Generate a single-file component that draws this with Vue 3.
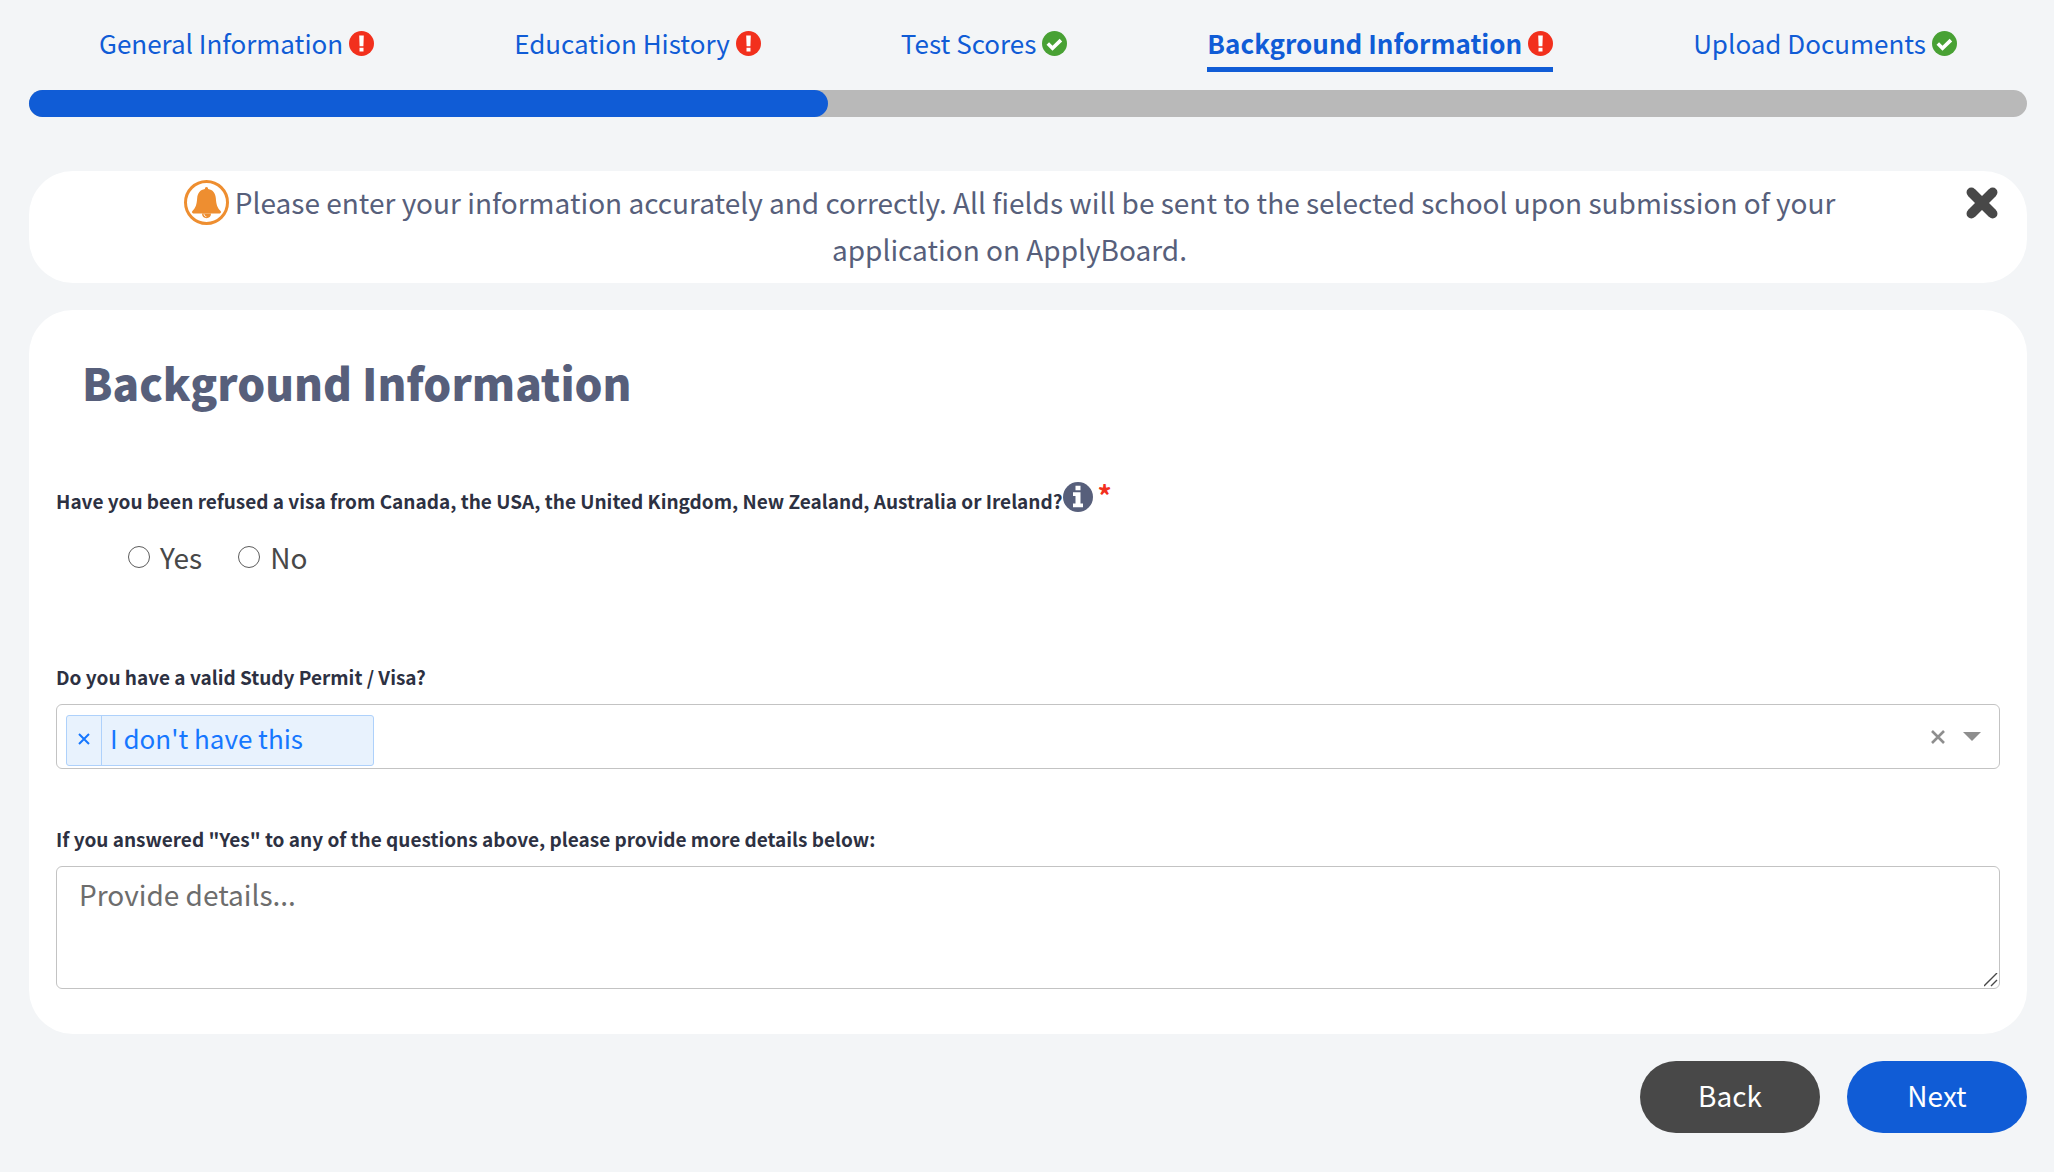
<script setup>
import { ref } from 'vue'

const tabs = [
  { label: 'General Information', complete: false },
  { label: 'Education History', complete: false },
  { label: 'Test Scores', complete: true },
  { label: 'Background Information', complete: false, current: true },
  { label: 'Upload Documents', complete: true },
]

const progress = ref(40)
const showNotice = ref(true)
const refused = ref('')
const permits = ref(["I don't have this"])
const details = ref('')

function removePermit(index) {
  permits.value.splice(index, 1)
}
</script>

<template>
  <div class="page">
    <nav class="tabs" aria-label="Application steps">
      <a
        v-for="tab in tabs"
        :key="tab.label"
        href="#"
        class="tab"
        :class="{ current: tab.current }"
        :aria-current="tab.current ? 'step' : undefined"
      >
        <span>{{ tab.label }}</span>
        <svg v-if="tab.complete" class="status" viewBox="0 0 25 25" aria-hidden="true">
          <circle cx="12.5" cy="12.5" r="12.5" fill="#48a134" />
          <path d="M5.8 12.6l4.7 4.7 8.4-8.2" fill="none" stroke="#fff" stroke-width="3.6" />
        </svg>
        <svg v-else class="status" viewBox="0 0 25 25" aria-hidden="true">
          <circle cx="12.5" cy="12.5" r="12.5" fill="#f2301d" />
          <path d="M10.2 4.6h4.6l-.4 10.6h-3.8zM10.5 16.8h4v3.8h-4z" fill="#fff" />
        </svg>
      </a>
    </nav>

    <div class="progress" role="progressbar" :aria-valuenow="progress">
      <div class="progress-fill" :style="{ width: progress + '%' }"></div>
    </div>

    <section v-if="showNotice" class="notice">
      <p class="notice-text">
        <svg class="bell" viewBox="0 0 45 45" aria-hidden="true">
          <circle cx="22.5" cy="22.5" r="21" fill="none" stroke="#ee8e30" stroke-width="3" />
          <path
            d="M22.5 7c1 0 1.6.7 1.6 1.9 4.700.7 7.300 4.100 7.700 9 .5 6.500 1.300 9.500 4.800 13.200.8.900.4 2.300-.8 2.300H9.200c-1.200 0-1.600-1.400-.8-2.300 3.500-3.700 4.300-6.700 4.800-13.200.4-4.900 3-8.300 7.700-9 0-1.200.6-1.900 1.600-1.900z"
            fill="#ee8e30"
          />
          <path d="M18 33.500h9c0 2.800-1.800 4.700-4.500 4.700S18 36.300 18 33.500z" fill="#ee8e30" />
          <path d="M20 34.200c.2 1.400 1 2.200 2.300 2.400" fill="none" stroke="#fff" stroke-width="1" />
        </svg>
        Please enter your information accurately and correctly. All fields will be sent to the
        selected school upon submission of your application on ApplyBoard.
      </p>
      <button class="notice-close" type="button" aria-label="Dismiss" @click="showNotice = false">
        <svg viewBox="0 0 30 30" aria-hidden="true">
          <path d="M5 5l20 20M25 5L5 25" stroke="#484848" stroke-width="9" />
          <path d="M5 5l20 20M25 5L5 25" stroke="#484848" stroke-width="9" stroke-linecap="round" />
        </svg>
      </button>
    </section>

    <form class="card" @submit.prevent>
      <h1>Background Information</h1>

      <fieldset class="field refused">
        <legend class="label">
          Have you been refused a visa from Canada, the USA, the United Kingdom, New Zealand,
          Australia or Ireland?<svg class="info" viewBox="0 0 30 30" aria-hidden="true">
            <circle cx="15" cy="15" r="15" fill="#575f7b" />
            <path d="M12.500 3.800h5v4.400h-5zM10 10.200h7.500v11.200H20v3.800H10v-3.800h2.500v-7.400H10z" fill="#fff" />
          </svg><span class="required">*</span>
        </legend>
        <div class="options">
          <label class="option"><input v-model="refused" type="radio" name="refused" value="yes" />Yes</label>
          <label class="option"><input v-model="refused" type="radio" name="refused" value="no" />No</label>
        </div>
      </fieldset>

      <div class="field permit">
        <label class="label" for="permit">Do you have a valid Study Permit / Visa?</label>
        <div class="picker">
          <div v-for="(permit, index) in permits" :key="permit" class="tag">
            <button class="tag-remove" type="button" aria-label="Remove" @click="removePermit(index)">
              <svg viewBox="0 0 12 12" aria-hidden="true">
                <path d="M1 1l10 10M11 1L1 11" stroke="currentColor" stroke-width="2" />
              </svg>
            </button>
            <span class="tag-text">{{ permit }}</span>
          </div>
          <input id="permit" class="picker-input" type="text" autocomplete="off" />
          <button class="picker-button" type="button" aria-label="Clear all" @click="permits = []">
            <svg class="clear" viewBox="0 0 14 14" aria-hidden="true">
              <path d="M1 1l12 12M13 1L1 13" stroke="#8e8e8e" stroke-width="2.6" />
            </svg>
          </button>
          <button class="picker-button" type="button" aria-label="Open list">
            <svg class="caret" viewBox="0 0 18 9" aria-hidden="true">
              <path d="M0 0h18L9 9z" fill="#8e8e8e" />
            </svg>
          </button>
        </div>
      </div>

      <div class="field">
        <label class="label" for="details">
          If you answered "Yes" to any of the questions above, please provide more details below:
        </label>
        <textarea id="details" v-model="details" placeholder="Provide details..."></textarea>
      </div>
    </form>

    <div class="actions">
      <button class="action back" type="button">Back</button>
      <button class="action next" type="button">Next</button>
    </div>
  </div>
</template>

<style>
body {
  margin: 0;
  background: #f3f5f7;
}
</style>

<style scoped>
.page {
  box-sizing: border-box;
  padding: 25px 27px 38px 29px;
  font-family: "Noto Sans CJK SC", "Noto Sans", sans-serif;
  font-size: 28px;
  color: #484848;
}

button,
input,
textarea {
  font: inherit;
  color: inherit;
}

button {
  padding: 0;
  border: 0;
  background: none;
  cursor: pointer;
}

svg {
  display: block;
  flex: none;
}

.tabs {
  display: flex;
  justify-content: space-around;
}

.tab {
  display: flex;
  align-items: center;
  gap: 6px;
  padding-bottom: 6px;
  border-bottom: 5px solid transparent;
  font-size: 26px;
  line-height: 36px;
  color: #105cd6;
  text-decoration: none;
}

.tab.current {
  border-color: #105cd6;
  font-weight: 700;
}

.status {
  width: 25px;
  height: 25px;
}

.progress {
  height: 27px;
  margin-top: 18px;
  border-radius: 14px;
  background: #b9b9b9;
}

.progress-fill {
  height: 100%;
  border-radius: 14px;
  background: #105cd6;
}

.notice {
  display: flex;
  align-items: flex-start;
  margin-top: 54px;
  padding: 8px 29px 10px 24px;
  border-radius: 44px;
  background: #fff;
}

.notice-text {
  flex: 1;
  margin: 0;
  padding: 0 90px;
  line-height: 47px;
  text-align: center;
  color: #575f7b;
}

.bell {
  display: inline-block;
  width: 45px;
  height: 45px;
  vertical-align: -11px;
}

.notice-close {
  margin-top: 8px;
}

.notice-close svg {
  width: 32px;
  height: 32px;
}

.card {
  margin-top: 27px;
  padding: 44px 27px 45px;
  border-radius: 44px;
  background: #fff;
}

h1 {
  margin: 0 0 77px;
  padding-left: 26px;
  font-size: 44px;
  font-weight: 900;
  line-height: 56px;
  color: #575f7b;
}

.field {
  margin: 0;
  padding: 0;
  border: 0;
}

.refused {
  margin-bottom: 86px;
}

.permit {
  margin-bottom: 56px;
}

.label {
  display: flex;
  padding: 0;
  font-size: 19px;
  font-weight: 700;
  line-height: 28px;
  color: #2d3142;
}

.info {
  width: 30px;
  height: 30px;
  margin-top: -5px;
}

.required {
  margin-left: 5px;
  font-size: 28px;
  line-height: 16px;
  color: #f2301d;
}

.options {
  display: flex;
  gap: 36px;
  margin-top: 22px;
  padding-left: 72px;
}

.option {
  display: flex;
  align-items: center;
  gap: 10px;
  line-height: 40px;
}

.option input {
  appearance: none;
  width: 22px;
  height: 22px;
  margin: 0;
  border: 1px solid #5c5c5c;
  border-radius: 50%;
  background: #fff;
}

.option input:checked {
  border: 6px solid #105cd6;
}

.picker {
  display: flex;
  align-items: center;
  box-sizing: border-box;
  height: 65px;
  margin-top: 13px;
  padding: 0 10px 0 9px;
  border: 1px solid #c3c3c3;
  border-radius: 6px;
}

.tag {
  display: flex;
  box-sizing: border-box;
  width: 308px;
  height: 51px;
  margin-top: 8px;
  border: 1px solid #aed1fb;
  border-radius: 3px;
  background: #e8f2fd;
  color: #1677ff;
}

.tag-remove {
  display: flex;
  align-items: center;
  justify-content: center;
  width: 35px;
  padding-bottom: 3px;
  border-right: 1px solid #aed1fb;
}

.tag-remove svg {
  width: 12px;
  height: 12px;
}

.tag-text {
  padding-left: 8px;
  font-size: 26px;
  line-height: 44px;
}

.picker-input {
  flex: 1;
  min-width: 0;
  height: 60px;
  padding: 0 8px;
  border: 0;
  outline: none;
  background: none;
}

.picker-button {
  width: 34px;
  height: 34px;
}

.picker-button svg {
  margin: 0 auto;
}

.clear {
  width: 14px;
  height: 14px;
}

.caret {
  width: 18px;
  height: 9px;
}

textarea {
  display: block;
  box-sizing: border-box;
  width: 100%;
  height: 123px;
  margin-top: 13px;
  padding: 7px 22px;
  border: 1px solid #c3c3c3;
  border-radius: 6px;
  line-height: 40px;
  resize: vertical;
}

textarea::placeholder {
  color: #6d6d6d;
}

textarea::-webkit-resizer {
  background: url("data:image/svg+xml,%3Csvg xmlns='http://www.w3.org/2000/svg' viewBox='0 0 15 15'%3E%3Cpath d='M0 13L13 0M7 13l6-6' stroke='%23484848' stroke-width='1.4'/%3E%3C/svg%3E") no-repeat center / contain;
}

.actions {
  display: flex;
  justify-content: flex-end;
  gap: 27px;
  margin-top: 27px;
}

.action {
  width: 180px;
  height: 72px;
  padding-bottom: 4px;
  border-radius: 36px;
  color: #fff;
}

.back {
  background: #484848;
}

.next {
  background: #105cd6;
}
</style>
